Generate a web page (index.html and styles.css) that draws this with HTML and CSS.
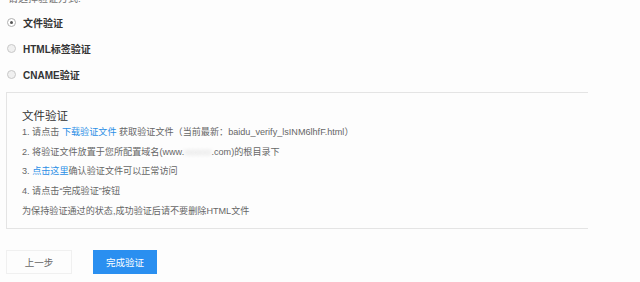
FILE: index.html
```html
<!DOCTYPE html>
<html lang="zh-CN">
<head>
<meta charset="utf-8">
<title>文件验证</title>
<link rel="stylesheet" href="styles.css">
</head>
<body>
<div class="page">
  <div class="prompt">请选择验证方式:</div>
  <ul class="methods">
    <li class="method"><span class="radio checked"></span><span class="label">文件验证</span></li>
    <li class="method"><span class="radio"></span><span class="label">HTML标签验证</span></li>
    <li class="method"><span class="radio"></span><span class="label">CNAME验证</span></li>
  </ul>
  <div class="panel">
    <h2 class="panel-title">文件验证</h2>
    <ol class="steps">
      <li>1. 请点击 <a class="link">下载验证文件</a> 获取验证文件（当前最新：baidu_verify_lsINM6lhfF.html）</li>
      <li>2. 将验证文件放置于您所配置域名(www.<span class="blur">xxxxxx</span>.com)的根目录下</li>
      <li>3. <a class="link">点击这里</a>确认验证文件可以正常访问</li>
      <li>4. 请点击“完成验证”按钮</li>
      <li class="note">为保持验证通过的状态,成功验证后请不要删除HTML文件</li>
    </ol>
  </div>
  <div class="actions">
    <button class="btn btn-default">上一步</button>
    <button class="btn btn-primary">完成验证</button>
  </div>
</div>
</body>
</html>
```
FILE: styles.css
```css
html, body {
  margin: 0;
  padding: 0;
  background: #fdfdfd;
}
body {
  font-family: "Liberation Sans", "Noto Sans CJK SC", sans-serif;
  color: #666;
  width: 640px;
  height: 282px;
  overflow: hidden;
}
.page {
  margin-top: -8px;
  padding-left: 6px;
  width: 582px;
}
.prompt {
  font-size: 10px;
  line-height: 13px;
  padding-left: 2px;
  color: #777;
}
.methods {
  list-style: none;
  margin: 0;
  padding: 0;
}
.method {
  display: flex;
  align-items: center;
  height: 26px;
}
.method:first-child {
  margin-top: 4px;
}
.radio {
  width: 7px;
  height: 7px;
  border: 1px solid #c8c8c8;
  border-radius: 50%;
  background: #f0f0f0;
  margin-left: 1px;
  margin-right: 7px;
  position: relative;
}
.radio.checked {
  background: #fff;
  border-color: #b0b0b0;
}
.radio.checked::after {
  content: "";
  position: absolute;
  left: 2px;
  top: 2px;
  width: 3px;
  height: 3px;
  border-radius: 50%;
  background: #555;
}
.label {
  font-size: 10px;
  font-weight: bold;
  color: #333;
}
.panel {
  margin-top: 5px;
  border: 1px solid #e4e4e4;
  border-right-width: 0;
  height: 137px;
  box-sizing: border-box;
  padding: 15px 0 0 15px;
  background: #fdfdfd;
}
.panel-title {
  margin: 0 0 -1px;
  font-size: 11.5px;
  font-weight: normal;
  color: #333;
  line-height: 16px;
}
.steps {
  list-style: none;
  margin: 0;
  padding: 0;
}
.steps li {
  font-size: 9.1px;
  line-height: 19.7px;
  height: 19.7px;
  white-space: nowrap;
}
.link {
  color: #2b8fe6;
}
.blur {
  color: transparent;
  text-shadow: 0 0 4px #ccc;
}
.actions {
  display: flex;
  gap: 21px;
  margin-top: 21px;
}
.btn {
  font-family: inherit;
  font-size: 9.5px;
  height: 24px;
  border-radius: 0;
  cursor: pointer;
  padding: 0;
}
.btn-default {
  width: 66px;
  background: #fdfdfd;
  border: 1px solid #f0f0f0;
  color: #666;
}
.btn-primary {
  width: 64px;
  background: #2a8ff0;
  border: 1px solid #2a8ff0;
  color: #fff;
}
```
